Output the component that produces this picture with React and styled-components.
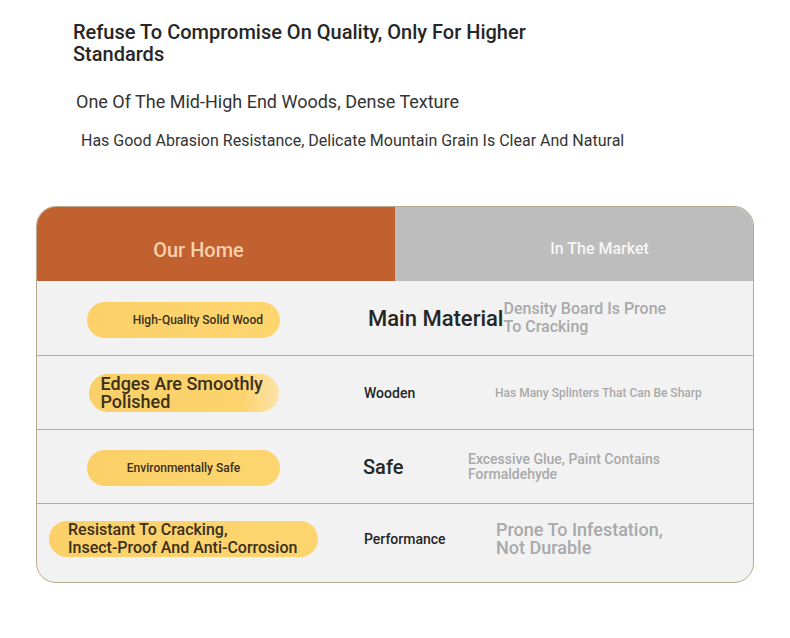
import React from "react";
import styled, { createGlobalStyle } from "styled-components";

const GlobalStyle = createGlobalStyle`
  body {
    margin: 0;
    background: #ffffff;
    font-family: Roboto, "Liberation Sans", sans-serif;
  }
`;

const rows = [
  {
    pill: { text: "High-Quality Solid Wood", size: 12, w: 193, h: 36, align: "flex-end", pad: "0 17px 0 0", lh: 14, nudge: 4 },
    label: { text: "Main Material", size: 22, w: null, left: 38 },
    desc: { lines: ["Density Board Is Prone", "To Cracking"], size: 16, lh: 18 },
  },
  {
    pill: { text: ["Edges Are Smoothly", "Polished"], size: 18, w: 190, h: 38, align: "flex-start", pad: "0 0 0 12px", lh: 18, fade: true },
    label: { text: "Wooden", size: 14, w: 131, left: 34 },
    desc: { lines: ["Has Many Splinters That Can Be Sharp"], size: 12, lh: 14 },
  },
  {
    pill: { text: "Environmentally Safe", size: 12, w: 193, h: 36, align: "center", pad: "0", lh: 14, nudge: 2 },
    label: { text: "Safe", size: 20, w: 105, left: 33 },
    desc: { lines: ["Excessive Glue, Paint Contains", "Formaldehyde"], size: 14, lh: 15 },
  },
  {
    pill: { text: ["Resistant To Cracking,", "Insect-Proof And Anti-Corrosion"], size: 16, w: 269, h: 36, align: "flex-start", pad: "0 0 0 19px", lh: 18 },
    label: { text: "Performance", size: 14, w: 132, left: 34 },
    desc: { lines: ["Prone To Infestation,", "Not Durable"], size: 18, lh: 18 },
  },
];

function Lines({ value }) {
  const list = Array.isArray(value) ? value : [value];
  return list.map((line, i) => (
    <React.Fragment key={i}>
      {i > 0 && <br />}
      {line}
    </React.Fragment>
  ));
}

export default function App() {
  return (
    <>
      <GlobalStyle />
      <Page>
        <Intro>
          <Heading>
            Refuse To Compromise On Quality, Only For Higher
            <br />
            Standards
          </Heading>
          <SubHeading>One Of The Mid-High End Woods, Dense Texture</SubHeading>
          <Note>
            Has Good Abrasion Resistance, Delicate Mountain Grain Is Clear And Natural
          </Note>
        </Intro>

        <Table>
          <Header>
            <HeadCell $bg="#c1612f" $color="#f7d0ae" $size={20} $shift="0 35px 0 0" $top={12}>
              Our Home
            </HeadCell>
            <HeadCell $bg="#bdbdbd" $color="#f6f6f6" $size={16} $shift="0 0 0 51px" $top={8}>
              In The Market
            </HeadCell>
          </Header>
          {rows.map((row, i) => (
            <Row key={i} $first={i === 0} $last={i === rows.length - 1}>
              <PillCell $nudge={row.pill.nudge}>
                <Pill
                  $w={row.pill.w}
                  $h={row.pill.h}
                  $size={row.pill.size}
                  $lh={row.pill.lh}
                  $align={row.pill.align}
                  $pad={row.pill.pad}
                  $fade={row.pill.fade}
                >
                  <span>
                    <Lines value={row.pill.text} />
                  </span>
                </Pill>
              </PillCell>
              <CompareCell>
                <Label $size={row.label.size} $w={row.label.w} $left={row.label.left}>
                  {row.label.text}
                </Label>
                <Desc $size={row.desc.size} $lh={row.desc.lh}>
                  <Lines value={row.desc.lines} />
                </Desc>
              </CompareCell>
            </Row>
          ))}
        </Table>
      </Page>
    </>
  );
}

const Page = styled.div`
  width: 790px;
  min-height: 638px;
  padding-top: 21px;
  box-sizing: border-box;
`;

const Intro = styled.div`
  display: flex;
  flex-direction: column;
  align-items: flex-start;
`;

const Heading = styled.div`
  margin-left: 73px;
  font-size: 20px;
  line-height: 22px;
  font-weight: 500;
  color: #262626;
`;

const SubHeading = styled.div`
  margin: 27px 0 0 76px;
  font-size: 18px;
  line-height: 20px;
  color: #333333;
`;

const Note = styled.div`
  margin: 20px 0 0 81px;
  font-size: 16px;
  line-height: 18px;
  color: #333333;
`;

const Table = styled.div`
  margin: 56px 0 0 36px;
  width: 718px;
  box-sizing: border-box;
  border: 1px solid #b9a98f;
  border-radius: 20px;
  overflow: hidden;
  background: #f2f2f2;
`;

const Header = styled.div`
  display: grid;
  grid-template-columns: 358px 1fr;
  height: 74px;
`;

const HeadCell = styled.div`
  display: flex;
  align-items: center;
  justify-content: center;
  padding: ${(p) => p.$shift};
  padding-top: ${(p) => p.$top}px;
  box-sizing: border-box;
  background: ${(p) => p.$bg};
  color: ${(p) => p.$color};
  font-size: ${(p) => p.$size}px;
  font-weight: 500;
`;

const Row = styled.div`
  display: grid;
  grid-template-columns: 293px 1fr;
  box-sizing: border-box;
  height: ${(p) => (p.$last ? 79 : 74)}px;
  padding-bottom: ${(p) => (p.$last ? 8 : 0)}px;
  border-top: ${(p) => (p.$first ? "none" : "1px solid #ababab")};
`;

const PillCell = styled.div`
  display: flex;
  align-items: center;
  justify-content: center;
  padding-top: ${(p) => p.$nudge || 0}px;
`;

const Pill = styled.div`
  width: ${(p) => p.$w}px;
  height: ${(p) => p.$h}px;
  border-radius: ${(p) => p.$h / 2}px;
  box-sizing: border-box;
  display: flex;
  align-items: center;
  justify-content: ${(p) => p.$align};
  padding: ${(p) => p.$pad};
  background: ${(p) =>
    p.$fade
      ? "linear-gradient(90deg, #f9cf68 0%, #fcd36d 80%, #fde3a8 100%)"
      : "linear-gradient(90deg, #fbd069 0%, #fdd56f 100%)"};
  color: #3a301c;
  font-size: ${(p) => p.$size}px;
  line-height: ${(p) => p.$lh}px;
  font-weight: 500;
  white-space: nowrap;
`;

const CompareCell = styled.div`
  display: flex;
  align-items: center;
`;

const Label = styled.div`
  margin-left: ${(p) => p.$left}px;
  width: ${(p) => (p.$w ? `${p.$w}px` : "auto")};
  flex-shrink: 0;
  font-size: ${(p) => p.$size}px;
  font-weight: 500;
  color: #262626;
  white-space: nowrap;
`;

const Desc = styled.div`
  font-size: ${(p) => p.$size}px;
  line-height: ${(p) => p.$lh}px;
  font-weight: 500;
  color: #a9a9a9;
  white-space: nowrap;
`;
